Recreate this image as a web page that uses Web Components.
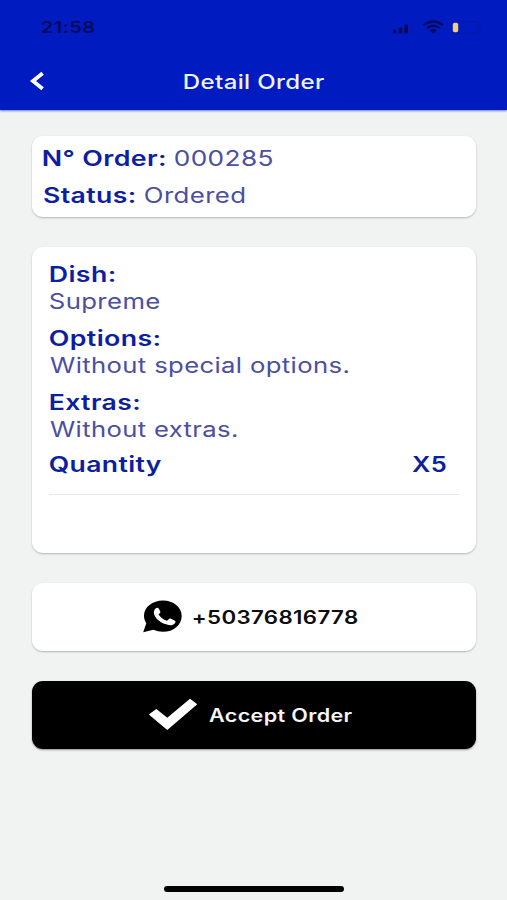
<!DOCTYPE html>
<html lang="en">
<head>
<meta charset="utf-8">
<title>Detail Order</title>
<style>
html,body{margin:0;height:100%;overflow:hidden;background:#f1f3f3;font-family:Inter,"Liberation Sans",sans-serif}
</style>
</head>
<body>
<order-screen></order-screen>
<script>
const measure = document.createElement('canvas').getContext('2d');

// A single line of extended lettering, stretched to the width given in "w".
class WideText extends HTMLElement {
  connectedCallback() {
    const size = +this.getAttribute('size') || 21;
    const weight = this.getAttribute('weight') || 400;
    const width = +this.getAttribute('w');
    measure.font = `${weight} ${size}px Inter, "Liberation Sans", sans-serif`;
    measure.letterSpacing = '0.3px';
    const m = measure.measureText(this.textContent);
    const scale = width / (m.actualBoundingBoxRight + m.actualBoundingBoxLeft);
    this.attachShadow({mode: 'open'}).innerHTML = `<style>
      :host{display:block;flex:none;width:${width}px;white-space:pre;font-size:${size}px;font-weight:${weight};letter-spacing:.3px}
      span{display:inline-block;transform-origin:0 50%;transform:scaleX(${scale}) translateX(${m.actualBoundingBoxLeft}px)}
      </style><span><slot></slot></span>`;
  }
}
customElements.define('wide-text', WideText);

function define(name, html) {
  customElements.define(name, class extends HTMLElement {
    constructor() {
      super();
      this.attachShadow({mode: 'open'}).innerHTML = html;
    }
  });
}

define('status-bar', `<style>
  :host{display:flex;height:54px;box-sizing:border-box;padding:0 25px 0 42px;justify-content:space-between;align-items:center;color:#050a5c}
  svg{display:block}
  </style><wide-text size="16.5" weight="600" w="52.5">21:58</wide-text>
  <svg width="92" height="18" viewBox="0 0 92 18">
    <g fill="#050a5c"><rect x="3" y="11.5" width="3.4" height="4" rx="1"/><rect x="8.6" y="9.5" width="3.6" height="6" rx="1"/><rect x="14.2" y="6.5" width="3.8" height="9" rx="1"/></g>
    <rect x="20" y="6" width="3.8" height="9.5" rx="1" fill="#0619b2"/>
    <g fill="none" stroke="#050a5c" stroke-width="2.3"><path d="M33.6 7.2Q43.3-.3 53 7.2"/><path d="M37 10.2Q43.3 5.2 49.6 10.2"/></g>
    <path d="M39.7 12.3Q43.3 9.6 46.9 12.3L43.3 15.7Z" fill="#050a5c"/>
    <rect x="61.5" y="3.6" width="27" height="11.6" rx="3.5" fill="none" stroke="#0816a6"/>
    <path d="M90 7q2 2.4 0 4.8Z" fill="#0816a6"/>
    <rect x="62.8" y="4.8" width="5.4" height="9.4" rx="1.8" fill="#f1cf78"/>
  </svg>`);

define('app-header', `<style>
  :host{display:block;height:110px;flex:none;background:#001bc0;color:#eef3ff;box-shadow:0 1px 2px #6e7cd8}
  nav{display:grid;grid-template-columns:1fr auto 1fr;height:54px;align-items:center;padding:0 29px 0 30px}
  svg{display:block}
  wide-text{padding-top:1.5px}
  </style><status-bar></status-bar>
  <nav><svg width="16" height="20" viewBox="0 0 16 20"><path d="M12.6 2.3L3 10l9.6 7.7" fill="none" stroke="#fff" stroke-width="3.8"/></svg>
  <wide-text size="20" weight="500" w="140.5">Detail Order</wide-text></nav>`);

define('panel-card', `<style>
  :host{display:block;box-sizing:border-box;background:#fff;border-radius:11px;box-shadow:0 1px 2px rgba(0,0,0,.25)}
  </style><slot></slot>`);

define('order-summary', `<style>
  :host{display:block}
  panel-card{height:80.5px;padding:4px 12px 0 11px}
  div{display:flex;gap:10.8px;line-height:37.4px;color:#0d1fa0}
  .v{color:#4c4ea2}
  </style><panel-card>
  <div><wide-text weight="600" w="121.5">N° Order:</wide-text><wide-text class="v" weight="400" w="97.5">000285</wide-text></div>
  <div><wide-text weight="600" w="91">Status:</wide-text><wide-text class="v" weight="400" w="100">Ordered</wide-text></div>
  </panel-card>`);

define('detail-field', `<style>
  :host{display:block;line-height:26.8px;color:#4c4ea2}
  .l{display:block;color:#0d1fa0}
  </style><div class="l"><slot name="label"></slot></div><slot></slot>`);

define('order-details', `<style>
  :host{display:block}
  panel-card{height:306px;padding:15.4px 17px 0}
  .fields{display:flex;flex-direction:column;gap:10.3px;padding-left:.8px}
  .qty{display:flex;justify-content:space-between;margin-top:8.6px;padding:0 12.8px 14.8px .8px;line-height:26.8px;color:#0d1fa0;border-bottom:1.5px solid #e6e8ea}
  </style><panel-card>
  <div class="fields">
    <detail-field><wide-text slot="label" weight="600" w="64">Dish:</wide-text><wide-text weight="400" w="110">Supreme</wide-text></detail-field>
    <detail-field><wide-text slot="label" weight="600" w="109">Options:</wide-text><wide-text weight="400" w="298.5">Without special options.</wide-text></detail-field>
    <detail-field><wide-text slot="label" weight="600" w="88.5">Extras:</wide-text><wide-text weight="400" w="187">Without extras.</wide-text></detail-field>
  </div>
  <div class="qty"><wide-text weight="600" w="111">Quantity</wide-text><wide-text weight="600" w="34.5">X5</wide-text></div>
  </panel-card>`);

define('contact-card', `<style>
  :host{display:block}
  panel-card{display:flex;height:68px;align-items:center;padding-left:111px;gap:11px;color:#0c0c0c}
  svg{display:block;flex:none;margin-bottom:2px}
  </style><panel-card>
  <svg width="39" height="33" viewBox="0 0 39 33"><path d="M20 .4C9.5.4 1 7 1 15.6c0 3 .7 5.300 2.300 7.600L.2 32.300l10.200-2.500c2.900 1.300 6.100 2 9.600 2 10.400 0 18.700-7.100 18.700-15.900S30.400.4 20 .4Z" fill="#000"/>
  <path d="M12.800 8.300c.9-1 2.300-.7 2.900.2l1.600 2.900c.5 1-.8 2-1.700 3 2 3 4.500 5.200 8.400 6.400l2-1.800c.6-.5 1.300-.5 1.900-.2l3.600 1.700c1.100.5 1.200 1.100.8 1.900-1 2.100-3.600 3.200-6.500 2.700-7.300-1.200-14.300-6.500-14.900-12-.2-1.900.5-3.500 1.900-4.800Z" fill="#fff"/></svg>
  <wide-text size="18" weight="600" w="164.5">+50376816778</wide-text></panel-card>`);

define('accept-button', `<style>
  :host{display:block}
  button{display:flex;box-sizing:border-box;width:100%;height:68px;border:0;border-radius:11px;background:#000;color:#f5f5f5;align-items:center;padding:0 0 0 116px;gap:11px;font:inherit;text-align:left;box-shadow:0 1px 2px rgba(0,0,0,.4)}
  svg{display:block;flex:none;margin-bottom:2px}
  </style><button><svg width="50" height="34" viewBox="0 0 50 34"><path d="M.8 17.5L8.300 12l11 8.700L42 1.800l7.300 5.400L19.300 33Z" fill="#fff"/></svg>
  <wide-text size="18" weight="600" w="143">Accept Order</wide-text></button>`);

define('order-screen', `<style>
  :host{display:flex;flex-direction:column;width:507px;height:900px;background:#f1f3f3}
  main{flex:1;display:flex;flex-direction:column;padding:26px 31px 0 32px;gap:30.3px}
  footer{display:flex;justify-content:center;height:14px;padding-left:1px}
  footer i{width:180px;height:5.5px;border-radius:3px;background:#000}
  </style><app-header></app-header>
  <main><order-summary></order-summary><order-details></order-details><contact-card></contact-card><accept-button></accept-button></main>
  <footer><i></i></footer>`);
</script>
</body>
</html>
